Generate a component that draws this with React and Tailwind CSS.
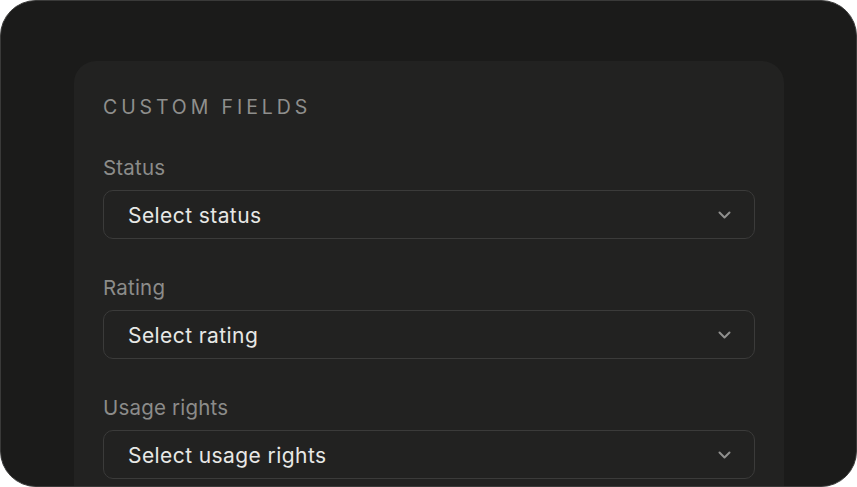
import React from "react";

function Field({ label, placeholder }) {
  return (
    <div className="flex flex-col">
      <div className="text-[20.5px] leading-[24px] tracking-[0.01em] text-[#8c8c8a] mb-[10px]">{label}</div>
      <div className="h-[49px] rounded-[10px] border border-[#3b3b3a] bg-[#222221] flex items-center justify-between pl-[24px] pr-[23px]">
        <span className="text-[21px] leading-[26px] pt-[2px] tracking-[0.02em] text-[#e8e8e6]">{placeholder}</span>
        <svg width="13" height="8" viewBox="0 0 13 8" fill="none" stroke="#8f8f8d" strokeWidth="2" strokeLinecap="round" strokeLinejoin="round" className="mt-[1px]">
          <path d="M1.5 1.5l5 5 5-5" />
        </svg>
      </div>
    </div>
  );
}

export default function App() {
  return (
    <div className="w-[857px] h-[487px] bg-white overflow-hidden" style={{ fontFamily: "Inter, 'Noto Sans', sans-serif" }}>
      <div className="w-full h-full rounded-[36px] bg-[#1b1b1a] border border-[#3a3a39] overflow-hidden pt-[60px] pl-[73px] pr-[72px]">
        <div className="bg-[#222221] rounded-t-[22px] h-[480px] pt-[34px] px-[29px]">
          <div className="text-[19.5px] leading-[24px] tracking-[0.2em] text-[#8f8f8d] mb-[37px]">CUSTOM FIELDS</div>
          <div className="flex flex-col gap-[37px]">
            <Field label="Status" placeholder="Select status" />
            <Field label="Rating" placeholder="Select rating" />
            <Field label="Usage rights" placeholder="Select usage rights" />
          </div>
        </div>
      </div>
    </div>
  );
}
